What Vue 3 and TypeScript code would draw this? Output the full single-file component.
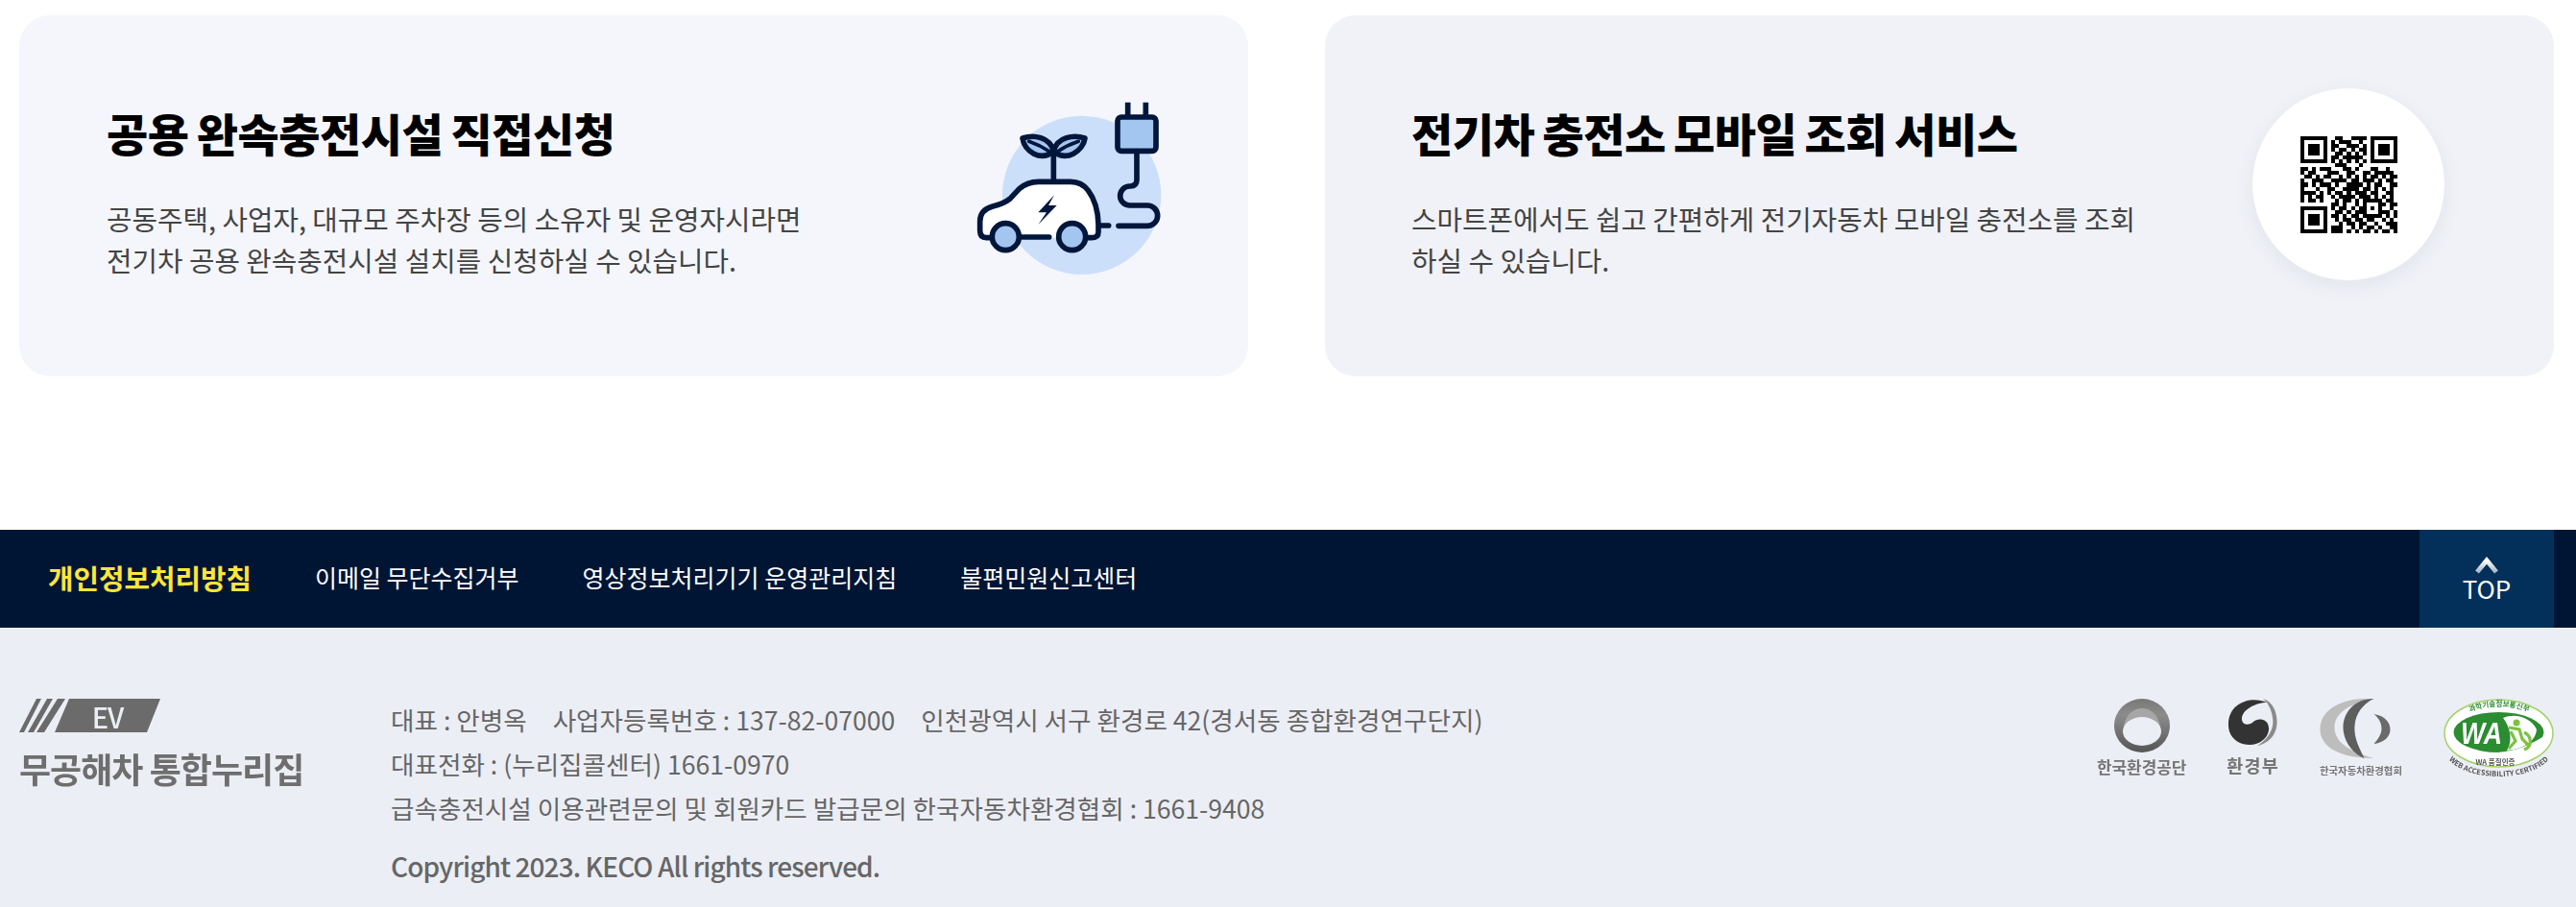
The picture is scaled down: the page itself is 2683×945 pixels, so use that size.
<script setup lang="ts">
import { computed } from 'vue'

const F1 = '1111111'
const F2 = '1000001'
const F3 = '1011101'
const rows: string[] = [
  F1 + '00110011110' + F1,
  F2 + '01011100100' + F2,
  F3 + '01100111010' + F3,
  F3 + '01011010110' + F3,
  F3 + '00110101010' + F3,
  F2 + '01101111100' + F2,
  F1 + '01010101010' + F1,
  '00000000' + '011100010' + '00000000',
  '1101011100011010001100100',
  '1011000111001100110111110',
  '0110101100101010101101011',
  '1001110011110110111010110',
  '1101011101001111010110011',
  '1000100110011110110101010',
  '1111010101101011101100110',
  '1010110010111101110101010',
  '10110100' + '01011010' + '11111' + '0110',
  '00000000' + '11010010' + '10001' + '1011',
  F1 + '0' + '10110101' + '10101' + '0010',
  F2 + '0' + '01101011' + '10001' + '1101',
  F3 + '0' + '11010110' + '11111' + '0101',
  F3 + '0' + '01011011' + '01100' + '1010',
  F3 + '0' + '00101101' + '10010' + '0111',
  F2 + '0' + '11100101' + '01101' + '0011',
  F1 + '0' + '11101010' + '11010' + '1101'
]

const qrPath = computed(() => {
  let d = ''
  rows.forEach((row, y) => {
    row.split('').forEach((cell, x) => {
      if (cell === '1') d += `M${x} ${y}h1v1h-1z`
    })
  })
  return d
})

const navItems = ['이메일 무단수집거부', '영상정보처리기기 운영관리지침', '불편민원신고센터']
</script>

<template>
  <div class="page">
    <section class="cards">
      <article class="card card-a">
        <div class="copy">
          <h2>공용 완속충전시설 직접신청</h2>
          <p>공동주택, 사업자, 대규모 주차장 등의 소유자 및 운영자시라면<br />전기차 공용 완속충전시설 설치를 신청하실 수 있습니다.</p>
        </div>
        <svg class="ev-icon" viewBox="0 0 840 720" width="280" height="240" aria-hidden="true">
          <circle cx="500" cy="400" r="248" fill="#cbdffa" />
          <g fill="none" stroke="#00163a" stroke-width="17" stroke-linecap="round" stroke-linejoin="round">
            <path d="M644 110V155M700 110V155" stroke-linecap="butt" />
            <rect x="612" y="156" width="120" height="106" rx="12" fill="#a3c6f0" />
            <path d="M672 263V352Q672 372 652 372H650A30 30 0 0 0 650 432H705A32 32 0 0 1 705 496H615" />
            <path d="M558 495H584" />
            <path d="M412 358V262" />
            <path d="M412 262C400 218 350 210 315 222C320 262 372 298 412 262Z" fill="#a3c6f0" />
            <path d="M412 262C424 218 474 210 510 222C504 262 452 298 412 262Z" fill="#a3c6f0" />
            <path d="M335 232C358 240 382 252 400 264M490 232C466 240 442 252 424 264" stroke-width="11" />
            <path d="M215 533H202Q182 533 182 510V482Q182 446 222 435Q255 428 275 412L305 380Q330 358 365 358H465Q500 358 520 385Q550 425 552 490V515Q552 533 530 533H510L470 490L430 533H400H300L262 490L215 533Z" fill="#fff" stroke="none" />
            <path d="M215 533H202Q182 533 182 510V482Q182 446 222 435Q255 428 275 412L305 380Q330 358 365 358H465Q500 358 520 385Q550 425 552 490V515Q552 533 530 533H518" />
            <path d="M305 531H398" />
            <circle cx="262" cy="530" r="42" fill="#a3c6f0" />
            <circle cx="470" cy="530" r="42" fill="#a3c6f0" />
          </g>
          <path d="M414 400L364 454H390L364 492L422 432H396Z" fill="#00163a" />
        </svg>
      </article>

      <article class="card card-b">
        <div class="copy">
          <h2>전기차 충전소 모바일 조회 서비스</h2>
          <p>스마트폰에서도 쉽고 간편하게 전기자동차 모바일 충전소를 조회<br />하실 수 있습니다.</p>
        </div>
        <div class="qr-disc">
          <svg class="qr" viewBox="0 0 25 25" width="101" height="101" shape-rendering="crispEdges" aria-hidden="true">
            <path :d="qrPath" fill="#000" />
          </svg>
        </div>
      </article>
    </section>

    <footer class="footer">
      <nav class="foot-nav">
        <a class="strong">개인정보처리방침</a>
        <a v-for="item in navItems" :key="item">{{ item }}</a>
        <div class="top-btn">
          <svg width="24" height="19" viewBox="0 0 24 19" aria-hidden="true">
            <defs>
              <linearGradient id="chev" x1="0" y1="0" x2="0" y2="1">
                <stop offset="0" stop-color="#ffffff" />
                <stop offset="1" stop-color="#aab6c6" />
              </linearGradient>
            </defs>
            <path d="M2 17L12 5L22 17" fill="none" stroke="url(#chev)" stroke-width="5" />
          </svg>
          <span>TOP</span>
        </div>
      </nav>

      <div class="foot-body">
        <div class="brand">
          <div class="ev-badge">
            <svg width="150" height="36" viewBox="0 0 150 36" aria-hidden="true">
              <path d="M0 35L18 0H23L5 35ZM9 35L29 0H35L15 35ZM18 35L40 0H48L26 35Z" fill="#6b6b6b" />
              <path d="M52 0H147L133 35H37Z" fill="#6b6b6b" />
            </svg>
            <span class="ev-text">EV</span>
          </div>
          <div class="brand-name">무공해차 통합누리집</div>
        </div>

        <div class="info">
          <div class="line">
            <span>대표 : 안병옥</span>
            <span>사업자등록번호 : 137-82-07000</span>
            <span>인천광역시 서구 환경로 42(경서동 종합환경연구단지)</span>
          </div>
          <div class="line">대표전화 : (누리집콜센터) 1661-0970</div>
          <div class="line">급속충전시설 이용관련문의 및 회원카드 발급문의 한국자동차환경협회 : 1661-9408</div>
          <div class="line copyright">Copyright 2023. KECO All rights reserved.</div>
        </div>

        <div class="logos">
          <div class="logo logo-keco">
            <svg width="58" height="56" viewBox="0 0 58 56" aria-hidden="true">
              <defs>
                <linearGradient id="ring" x1="0" y1="0" x2="0" y2="1">
                  <stop offset="0" stop-color="#777" />
                  <stop offset="0.3" stop-color="#8c8c8c" />
                  <stop offset="1" stop-color="#555" />
                </linearGradient>
              </defs>
              <ellipse cx="29" cy="28" rx="29" ry="28" fill="url(#ring)" />
              <path d="M10 32C10 20 18 10 29 10C40 10 48 20 48 32C43 26 37 24 29 24C21 24 15 26 10 32Z" fill="#a6a6a6" />
              <ellipse cx="29" cy="34" rx="20" ry="15" fill="#eceef5" />
            </svg>
            <span class="logo-cap">한국환경공단</span>
          </div>
          <div class="logo logo-moe">
            <svg width="52" height="52" viewBox="0 0 52 52" aria-hidden="true">
              <path d="M40 4C25 -3 0 3 0 27C0 42 12 48 22 48C35 48 43 38 42 30C41 20 30 20 26 24C22 28 15 28 14 22C13 12 28 4 40 4Z" fill="#333" />
              <path d="M36 0C49 4 52 20 50 30C48 40 40 47 30 49C42 42 48 30 46 20C45 12 42 5 36 0Z" fill="#8a8a8a" />
            </svg>
            <span class="logo-cap cap-moe">환경부</span>
          </div>
          <div class="logo logo-kaea">
            <svg class="kaea-mark" width="75" height="64" viewBox="0 0 74 64" aria-hidden="true">
              <path d="M56 0C25 -2 0 10 0 32C0 50 20 62 56 62C30 55 15 45 15 30C15 15 30 5 56 0Z" fill="#bdbdbd" />
              <path d="M56 0C35 0 24 15 24 30C24 45 35 58 46 62C40 50 35 40 36 28C37 15 45 5 56 0Z" fill="#5e5e5e" />
              <path d="M56 16C68 18 73 25 73 32C73 40 66 46 56 47C62 40 64 36 64 31C64 25 61 20 56 16Z" fill="#6a6a6a" />
            </svg>
            <span class="logo-cap cap-kaea">한국자동차환경협회</span>
          </div>
          <svg class="logo-wa" width="115" height="84" viewBox="0 0 115 84" aria-hidden="true">
            <defs>
              <path id="waTop" d="M14 26C26 2 90 2 102 26" />
              <path id="waBot" d="M3 60C20 88 95 88 112 60" />
            </defs>
            <ellipse cx="57.500" cy="36" rx="56.500" ry="35" fill="#fff" stroke="#a2d26c" stroke-width="1.500" />
            <ellipse cx="57.500" cy="35" rx="47" ry="21" fill="#2b8c31" />
            <path d="M12 44C32 62 72 60 103 40C94 60 74 66 54 66C34 66 18 58 12 44Z" fill="#fff" />
            <path d="M62 20C75 14 92 20 97 32C96 44 85 52 66 54C72 44 70 30 62 20Z" fill="#fff" />
            <text class="wa-mark" x="18" y="47" textLength="43" lengthAdjust="spacingAndGlyphs">WA</text>
            <circle cx="76" cy="25" r="3.500" fill="#7cc242" />
            <path d="M68 30L79 32L82 42L90 50M70 34L75 44L68 52M84 35C92 39 93 50 84 53" fill="none" stroke="#7cc242" stroke-width="3.200" />
            <text class="wa-small green"><textPath href="#waTop" startOffset="50%" text-anchor="middle">과학기술정보통신부</textPath></text>
            <text class="wa-small dark" x="54" y="69" text-anchor="middle">WA 품질인증</text>
            <text class="wa-small dark"><textPath href="#waBot" startOffset="50%" text-anchor="middle">WEB ACCESSIBILITY CERTIFIED</textPath></text>
          </svg>
        </div>
      </div>
    </footer>
  </div>
</template>

<style>
html,
body {
  margin: 0;
  background: #fff;
}
</style>

<style scoped>
.page {
  height: 945px;
  overflow: hidden;
  font-family: "Noto Sans CJK KR", "Noto Sans", sans-serif;
}

.cards {
  display: grid;
  grid-template-columns: 1280px 1280px;
  column-gap: 80px;
  padding: 16px 0 0 20px;
}

.card {
  display: flex;
  justify-content: space-between;
  align-items: flex-start;
  height: 376px;
  border-radius: 32px;
  box-sizing: border-box;
}

.card-a {
  background: #f4f6fc;
  padding-right: 60px;
}

.card-b {
  background: #f0f2f7;
  padding-right: 114px;
}

.copy {
  padding: 90px 0 0 91px;
}

.card-b .copy {
  padding-left: 90px;
}

.copy h2 {
  margin: 0 0 36px;
  font-size: 47px;
  line-height: 64px;
  font-weight: 900;
  letter-spacing: -0.5px;
  word-spacing: -2px;
  color: #000;
  white-space: nowrap;
}

.copy p {
  margin: 0;
  font-size: 28.800px;
  line-height: 43px;
  color: #444;
  white-space: nowrap;
}

.ev-icon {
  display: block;
  margin-top: 54px;
  filter: blur(0.5px);
}

.qr-disc {
  display: flex;
  align-items: center;
  justify-content: center;
  width: 200px;
  height: 200px;
  margin-top: 76px;
  border-radius: 50%;
  background: #fff;
  box-shadow: 0 6px 20px rgba(120, 130, 160, 0.12);
}

.qr {
  display: block;
  filter: blur(0.6px);
}

.footer {
  margin-top: 160px;
  height: 393px;
  background: #eceef5;
}

.foot-nav {
  display: flex;
  align-items: center;
  gap: 66px;
  height: 102px;
  padding: 0 23px 0 50px;
  background: #001534;
  color: #fff;
  font-size: 25px;
}

.foot-nav a {
  padding-bottom: 4px;
}

.foot-nav .strong {
  color: #ffe53b;
  font-size: 28.800px;
  font-weight: 700;
}

.top-btn {
  display: flex;
  flex-direction: column;
  align-items: center;
  justify-content: center;
  width: 140px;
  height: 102px;
  margin-left: auto;
  background: #02305a;
  font-size: 26px;
  line-height: 30px;
}

.top-btn svg {
  display: block;
}

.foot-body {
  display: flex;
  align-items: flex-start;
  padding: 74px 23px 0 20px;
}

.brand {
  width: 387px;
  flex: none;
}

.ev-badge {
  position: relative;
  width: 150px;
  height: 36px;
  filter: blur(0.4px);
}

.ev-badge svg {
  display: block;
}

.ev-text {
  position: absolute;
  top: 0;
  left: 52px;
  width: 80px;
  text-align: center;
  font-size: 29px;
  line-height: 36px;
  font-weight: 500;
  color: #eceef5;
  letter-spacing: -1px;
}

.brand-name {
  margin-top: 13px;
  font-size: 36px;
  line-height: 46px;
  font-weight: 700;
  letter-spacing: -1px;
  color: #6e6e6e;
  white-space: nowrap;
  filter: blur(0.5px);
}

.info {
  color: #666;
  font-size: 26.600px;
  line-height: 46px;
  white-space: nowrap;
  margin-top: -1px;
}

.line {
  display: flex;
  gap: 27px;
}

.copyright {
  margin-top: 14px;
  font-size: 28px;
  font-weight: 500;
  letter-spacing: -0.900px;
}

.logos {
  display: flex;
  align-items: flex-start;
  gap: 42px;
  margin-left: auto;
}

.logo {
  display: flex;
  flex-direction: column;
  align-items: center;
}

.logo svg {
  display: block;
}

.logo-cap {
  margin-top: 5px;
  font-size: 16.900px;
  line-height: 20px;
  font-weight: 700;
  color: #757575;
  white-space: nowrap;
  filter: blur(0.6px);
}

.cap-moe {
  margin-top: 7px;
  font-size: 18.500px;
  letter-spacing: 1.200px;
}

.kaea-mark {
  align-self: flex-start;
}

.cap-kaea {
  margin-top: 1px;
  font-size: 10.400px;
}

.logo-wa {
  display: block;
  margin-left: 1px;
  filter: blur(0.3px);
}

.wa-mark {
  font-family: "Liberation Sans", sans-serif;
  font-size: 32px;
  font-weight: 700;
  font-style: italic;
  fill: #fff;
}

.wa-small {
  font-size: 7.500px;
  font-weight: 700;
}

.wa-small.green {
  fill: #2b8c31;
}

.wa-small.dark {
  fill: #555;
}
</style>
